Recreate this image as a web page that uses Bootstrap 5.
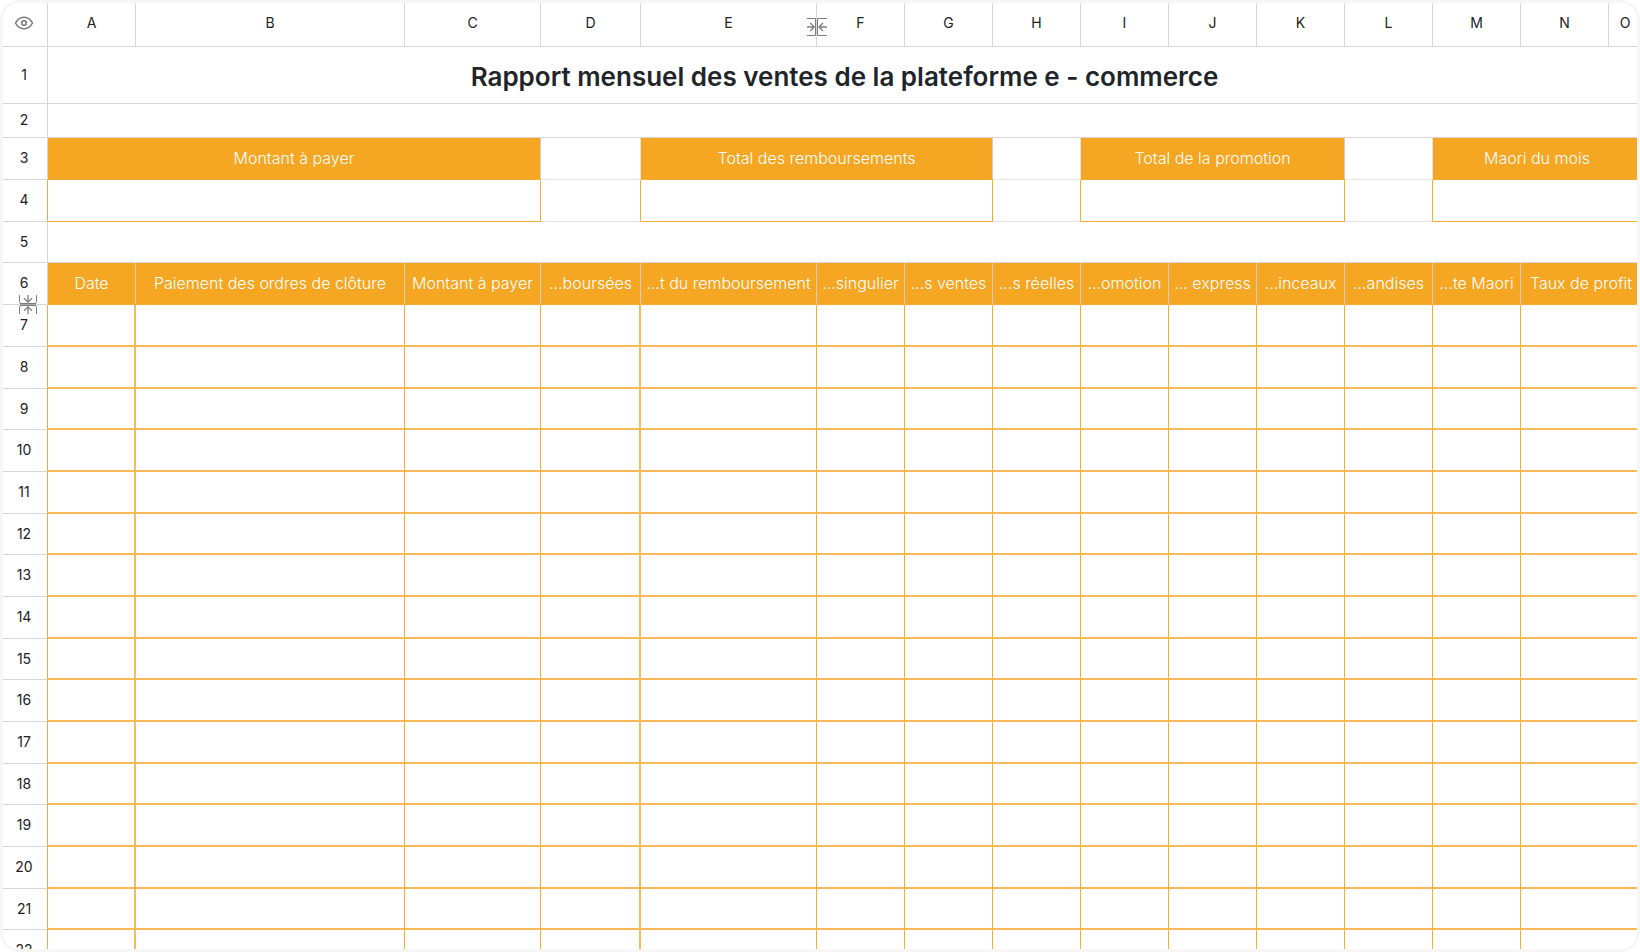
<!DOCTYPE html>
<html lang="fr">
<head>
<meta charset="utf-8">
<meta name="viewport" content="width=device-width, initial-scale=1">
<title>Rapport mensuel des ventes</title>
<link href="https://cdn.jsdelivr.net/npm/bootstrap@5.3.0/dist/css/bootstrap.min.css" rel="stylesheet">
<style>
  :root { --line: #d6d6d6; --orange: #f5a623; --orange-line: #f5ab34; --orange-soft: #f8b956; }
  body { font-family: Inter, "Liberation Sans", sans-serif; background: #fff; }
  .frame { background: #f6f6f6; border-radius: 20px; padding: 3px; }
  .sheet-view { border-radius: 16px; }
  .sheet { table-layout: fixed; border-collapse: separate; border-spacing: 0; color: #222; font-size: 14px; line-height: 20px; }
  .sheet th, .sheet td { padding: 0 0 1px; text-align: center; vertical-align: middle; white-space: nowrap; font-weight: 400; border: 0 solid var(--line); border-bottom-width: 1px; }
  .sheet thead th, .sheet tbody th[scope=row] { border-right-width: 1px; }
  .sheet thead th { padding-bottom: 3px; }
  .sheet th:first-child { padding-right: 2px; }
  .sheet thead th:last-child { border-right-width: 0; padding-left: 4px; }
  .c-num { width: 45px; } .c-std { width: 88px; } .c-b { width: 269px; } .c-c { width: 136px; } .c-d { width: 100px; } .c-e { width: 176px; }
  .h-head { height: 44px; } .h-title { height: 57px; } .h-thin { height: 34px; } .h-row { height: 42px; } .h-short { height: 41px; }
  .sheet .title-cell { padding: 4px 0 0 4px; font-size: 26px; line-height: 32px; font-weight: 600; color: #212529; }
  .sheet .fill { background: var(--orange); color: #fff; font-size: 16px; font-weight: 300; border-right-width: 1px; border-right-color: #d9cdb8; border-bottom-color: var(--orange-line); }
  .sheet .gap-cell { border-right-width: 1px; border-color: #e2e2e2; }
  .sheet .boxed { border-right-width: 1px; border-color: var(--orange-line); }
  .sheet .edge { border-right-color: var(--orange-line) !important; }
  .sheet .entry { border-right-width: 1px; border-bottom-width: 2px; border-right-color: var(--orange-line); border-bottom-color: var(--orange-soft); }
  .sheet .entry:nth-child(2), .sheet .entry:nth-child(5) { border-right-width: 2px; border-right-color: var(--orange-soft); }
  .sheet .fill:last-child, .sheet .boxed:last-child, .sheet .entry:last-child { border-right-width: 0; }
  .sheet .fill:last-child { padding-left: 4px; }
  .grip-col { right: -11px; top: 15px; z-index: 2; }
  .grip-row { left: 16px; bottom: -10px; z-index: 2; }
</style>
</head>
<body>
<main class="frame vh-100">
  <div class="sheet-view bg-white h-100 overflow-hidden">
    <table class="sheet w-100">
      <colgroup>
        <col class="c-num"><col class="c-std"><col class="c-b"><col class="c-c"><col class="c-d"><col class="c-e">
        <col class="c-std"><col class="c-std"><col class="c-std"><col class="c-std"><col class="c-std"><col class="c-std"><col class="c-std"><col class="c-std"><col class="c-std"><col>
      </colgroup>
      <thead>
        <tr class="h-head">
          <th scope="col" aria-label="Affichage">
            <svg class="d-block mx-auto" width="20" height="16" viewBox="0 0 20 16" fill="none" stroke="#777" stroke-width="1.5"><path d="M1.500 8C3.500 4.200 6.500 2.200 10 2.200S16.500 4.200 18.500 8C16.500 11.800 13.500 13.800 10 13.800S3.500 11.800 1.500 8Z"/><circle cx="10" cy="8" r="2.300"/></svg>
          </th>
          <th scope="col">A</th><th scope="col">B</th><th scope="col">C</th><th scope="col">D</th>
          <th scope="col" class="position-relative">E
            <svg class="grip-col position-absolute" width="20" height="18" viewBox="0 0 20 18" fill="none" stroke="#7d7d7d"><path d="M0 .5H8.500V17.500H0M20 .5H10.500V17.500H20"/><path stroke-width="1.300" d="M0 9H7M3.200 5 7.200 9 3.200 13M20 9H12.500M16 5 12 9 16 13"/></svg>
          </th>
          <th scope="col">F</th><th scope="col">G</th><th scope="col">H</th><th scope="col">I</th><th scope="col">J</th><th scope="col">K</th><th scope="col">L</th><th scope="col">M</th><th scope="col">N</th><th scope="col">O</th>
        </tr>
      </thead>
      <tbody id="rows">
        <tr class="h-title"><th scope="row">1</th><td class="title-cell" colspan="15">Rapport mensuel des ventes de la plateforme e - commerce</td></tr>
        <tr class="h-thin"><th scope="row">2</th><td colspan="15"></td></tr>
        <tr class="h-row"><th scope="row">3</th>
          <td class="fill" colspan="3">Montant à payer</td><td class="gap-cell"></td>
          <td class="fill" colspan="3">Total des remboursements</td><td class="gap-cell"></td>
          <td class="fill" colspan="3">Total de la promotion</td><td class="gap-cell"></td>
          <td class="fill" colspan="3">Maori du mois</td></tr>
        <tr class="h-row"><th scope="row" class="edge">4</th>
          <td class="boxed" colspan="3"></td><td class="gap-cell edge"></td>
          <td class="boxed" colspan="3"></td><td class="gap-cell edge"></td>
          <td class="boxed" colspan="3"></td><td class="gap-cell edge"></td>
          <td class="boxed" colspan="3"></td></tr>
        <tr class="h-short"><th scope="row">5</th><td colspan="15"></td></tr>
        <tr class="h-row"><th scope="row" class="position-relative">6
            <svg class="grip-row position-absolute" width="18" height="19" viewBox="0 0 18 19" fill="none" stroke="#7d7d7d"><path fill="#aaa" stroke="none" d="M1 8H17V11H1Z"/><path d="M.5 0V6.500Q.5 8.500 2 8.500H16Q17.500 8.500 17.500 6.500V0M.5 19V12.500Q.5 10.500 2 10.500H16Q17.500 10.500 17.500 12.500V19"/><path stroke-width="1.300" d="M9 0V7M5 3.200 9 7.200 13 3.200M9 19V12M5 15.800 9 11.800 13 15.800"/></svg>
          </th>
          <td class="fill">Date</td><td class="fill">Paiement des ordres de clôture</td><td class="fill">Montant à payer</td><td class="fill">...boursées</td><td class="fill">...t du remboursement</td><td class="fill">...singulier</td><td class="fill">...s ventes</td><td class="fill">...s réelles</td><td class="fill">...omotion</td><td class="fill">... express</td><td class="fill">...inceaux</td><td class="fill">...andises</td><td class="fill">...te Maori</td><td class="fill" colspan="2">Taux de profit</td></tr>
      </tbody>
    </table>
  </div>
</main>
<script src="https://cdn.jsdelivr.net/npm/bootstrap@5.3.0/dist/js/bootstrap.bundle.min.js"></script>
<script>
  // Empty entry rows, each with thirteen single cells and one merged N:O cell
  const rows = document.getElementById('rows');
  const cells = '<td class="entry"></td>'.repeat(13) + '<td class="entry" colspan="2"></td>';
  for (let n = 7; n <= 22; n++) {
    rows.insertAdjacentHTML('beforeend',
      `<tr class="${n % 3 === 0 ? 'h-short' : 'h-row'}"><th scope="row" class="edge">${n}</th>${cells}</tr>`);
  }
</script>
</body>
</html>
